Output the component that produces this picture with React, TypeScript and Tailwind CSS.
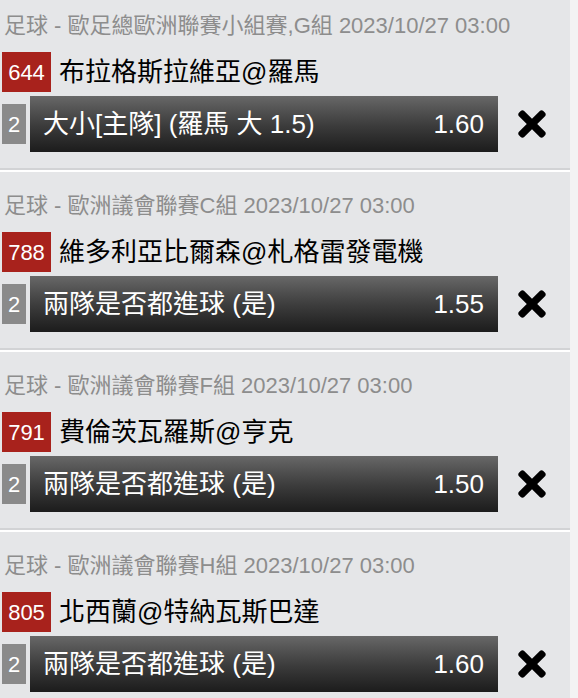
import { FaTimes } from 'react-icons/fa'

type Bet = {
  league: string
  code: string
  match: string
  count: string
  pick: string
  odds: string
}

const BETS: Bet[] = [
  {
    league: '足球 - 歐足總歐洲聯賽小組賽,G組 2023/10/27 03:00',
    code: '644',
    match: '布拉格斯拉維亞@羅馬',
    count: '2',
    pick: '大小[主隊] (羅馬 大 1.5)',
    odds: '1.60',
  },
  {
    league: '足球 - 歐洲議會聯賽C組 2023/10/27 03:00',
    code: '788',
    match: '維多利亞比爾森@札格雷發電機',
    count: '2',
    pick: '兩隊是否都進球 (是)',
    odds: '1.55',
  },
  {
    league: '足球 - 歐洲議會聯賽F組 2023/10/27 03:00',
    code: '791',
    match: '費倫茨瓦羅斯@亨克',
    count: '2',
    pick: '兩隊是否都進球 (是)',
    odds: '1.50',
  },
  {
    league: '足球 - 歐洲議會聯賽H組 2023/10/27 03:00',
    code: '805',
    match: '北西蘭@特納瓦斯巴達',
    count: '2',
    pick: '兩隊是否都進球 (是)',
    odds: '1.60',
  },
]

function BetRow({ bet }: { bet: Bet }) {
  return (
    <div className="pt-3">
      <div className="h-7 pl-1 text-[22px] leading-7 whitespace-nowrap text-[#8d8d8d]">{bet.league}</div>
      <div className="mt-3 flex h-10 items-center">
        <span className="ml-[2px] flex h-10 w-[49px] items-center justify-center bg-[#a8221c] text-[22px] text-white">
          {bet.code}
        </span>
        <span className="ml-2 text-[26px] leading-none whitespace-nowrap text-black">{bet.match}</span>
      </div>
      <div className="mt-1 flex h-14 items-center">
        <span className="ml-[2px] flex h-10 w-6 items-center justify-center bg-[#8a8a8a] text-[22px] text-white">
          {bet.count}
        </span>
        <div className="ml-1 flex h-14 w-[468px] items-center justify-between bg-gradient-to-b from-[#686868] via-[#3e3e3e] to-[#1c1c1c] pr-[14px] pl-[13px] text-[26px] leading-none whitespace-nowrap text-white">
          <span>{bet.pick}</span>
          <span>{bet.odds}</span>
        </div>
        <FaTimes size={40} className="ml-[14px] text-black" />
      </div>
      <div className="mt-4 h-[2px] bg-[#d2d3d5]" />
      <div className="h-[2px] bg-white" />
      <div className="h-2" />
    </div>
  )
}

export default function App() {
  return (
    <div
      className="flex min-h-screen bg-[#f3f3f3]"
      style={{ fontFamily: '"Liberation Sans", "Noto Sans CJK TC", sans-serif' }}
    >
      <div className="w-[570px] bg-[#e5e6e8]">
        {BETS.map((bet) => (
          <BetRow key={bet.code} bet={bet} />
        ))}
      </div>
    </div>
  )
}
